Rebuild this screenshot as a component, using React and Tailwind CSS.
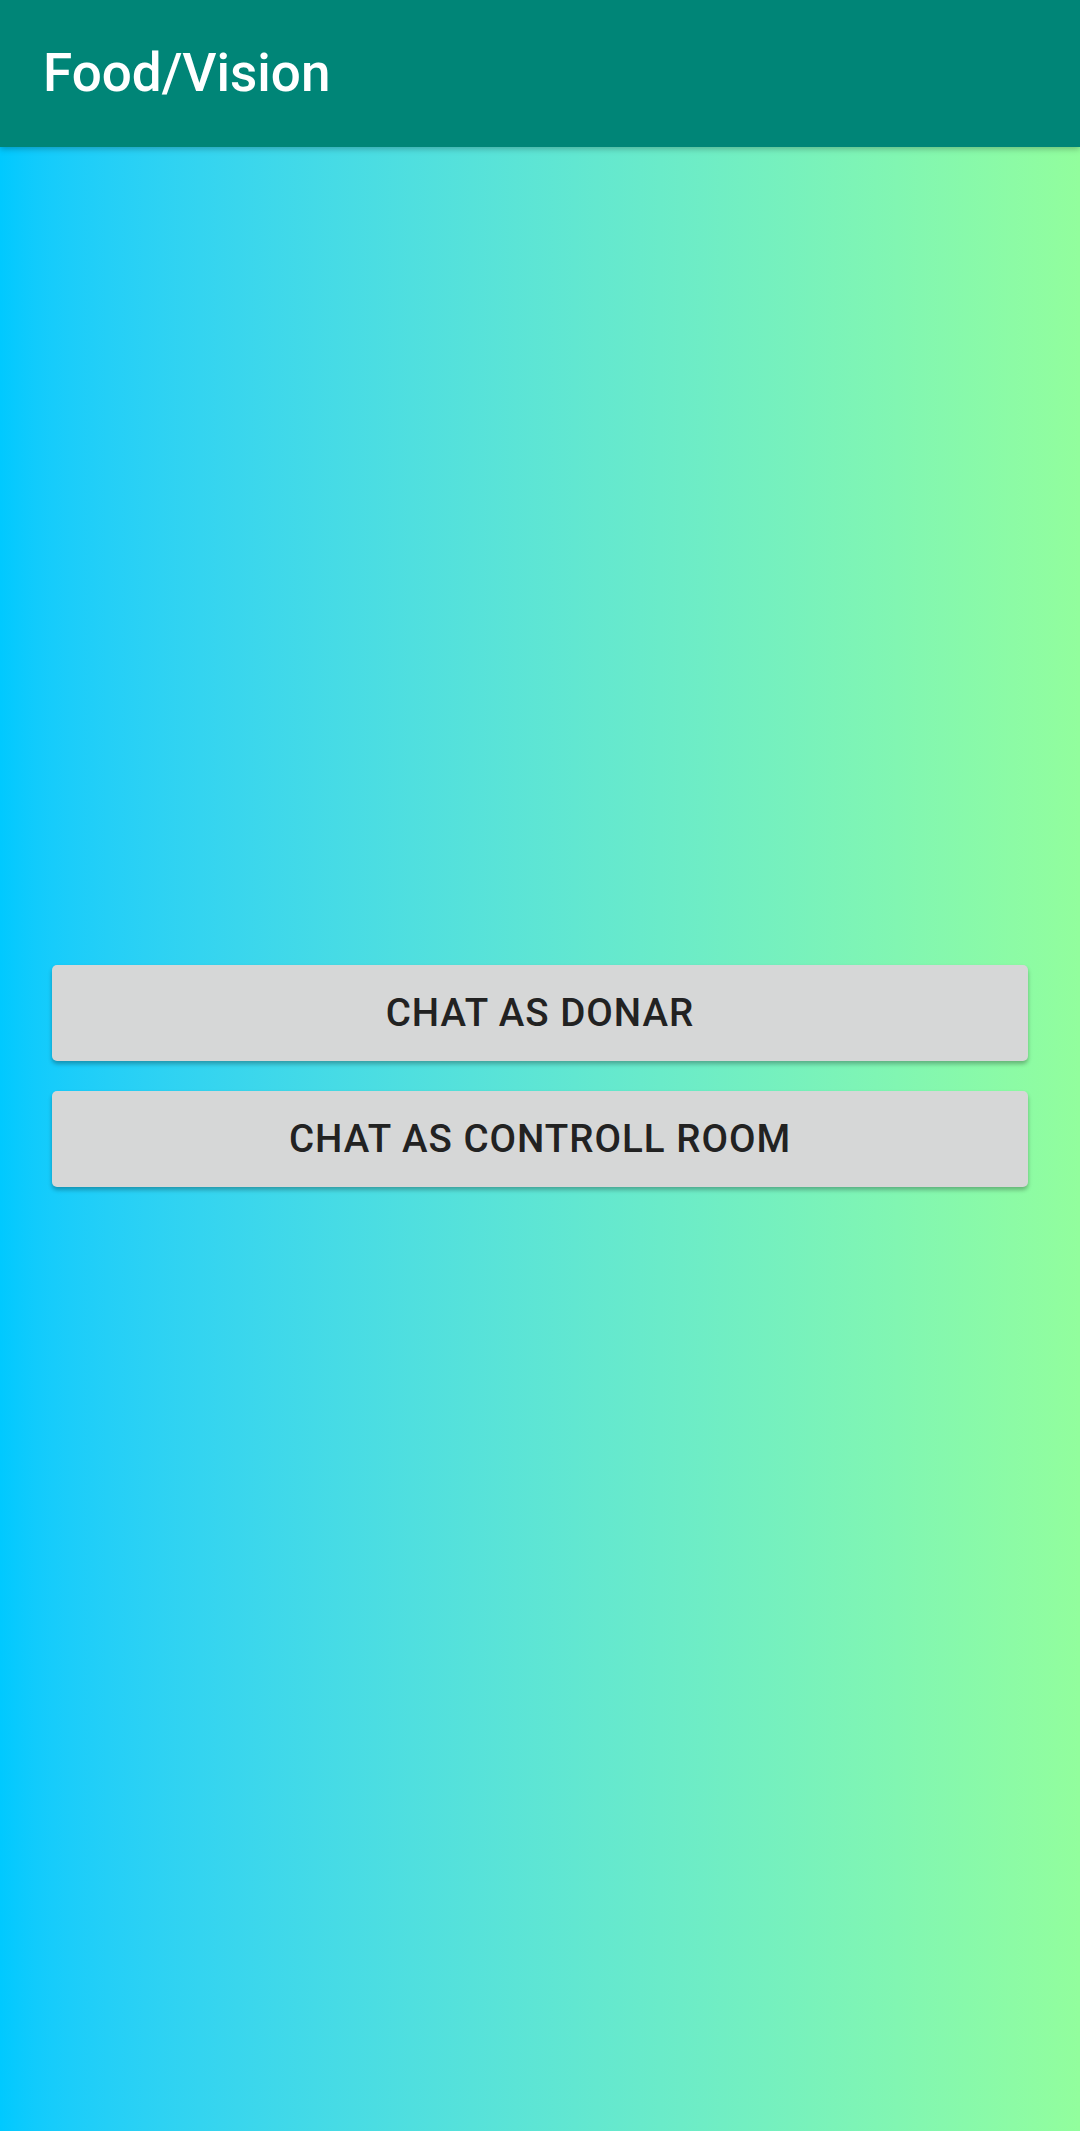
export default function App() {
  const buttons = ['CHAT AS DONAR', 'CHAT AS CONTROLL ROOM']

  return (
    <div
      className="flex flex-col h-[2131px] w-full bg-gradient-to-r from-[#00c9ff] to-[#92fe9d]"
      style={{ fontFamily: 'Roboto, "Noto Sans", sans-serif' }}
    >
      {/* App bar */}
      <header className="relative z-10 flex items-center h-[147px] px-[43px] bg-[#008577] shadow-[0_2px_6px_rgba(0,0,0,0.25)]">
        <h1 className="text-[53px] font-medium text-white leading-none">Food/Vision</h1>
      </header>

      {/* Buttons */}
      <main className="flex flex-col gap-[30px] px-[52px] pt-[818px]">
        {buttons.map((label) => (
          <button
            key={label}
            className="h-[96px] w-full rounded-[5px] bg-[#d6d7d7] text-[38.5px] font-medium text-[#222] tracking-[1px] shadow-[0_3px_4px_rgba(0,0,0,0.28)]"
          >
            {label}
          </button>
        ))}
      </main>
    </div>
  )
}
